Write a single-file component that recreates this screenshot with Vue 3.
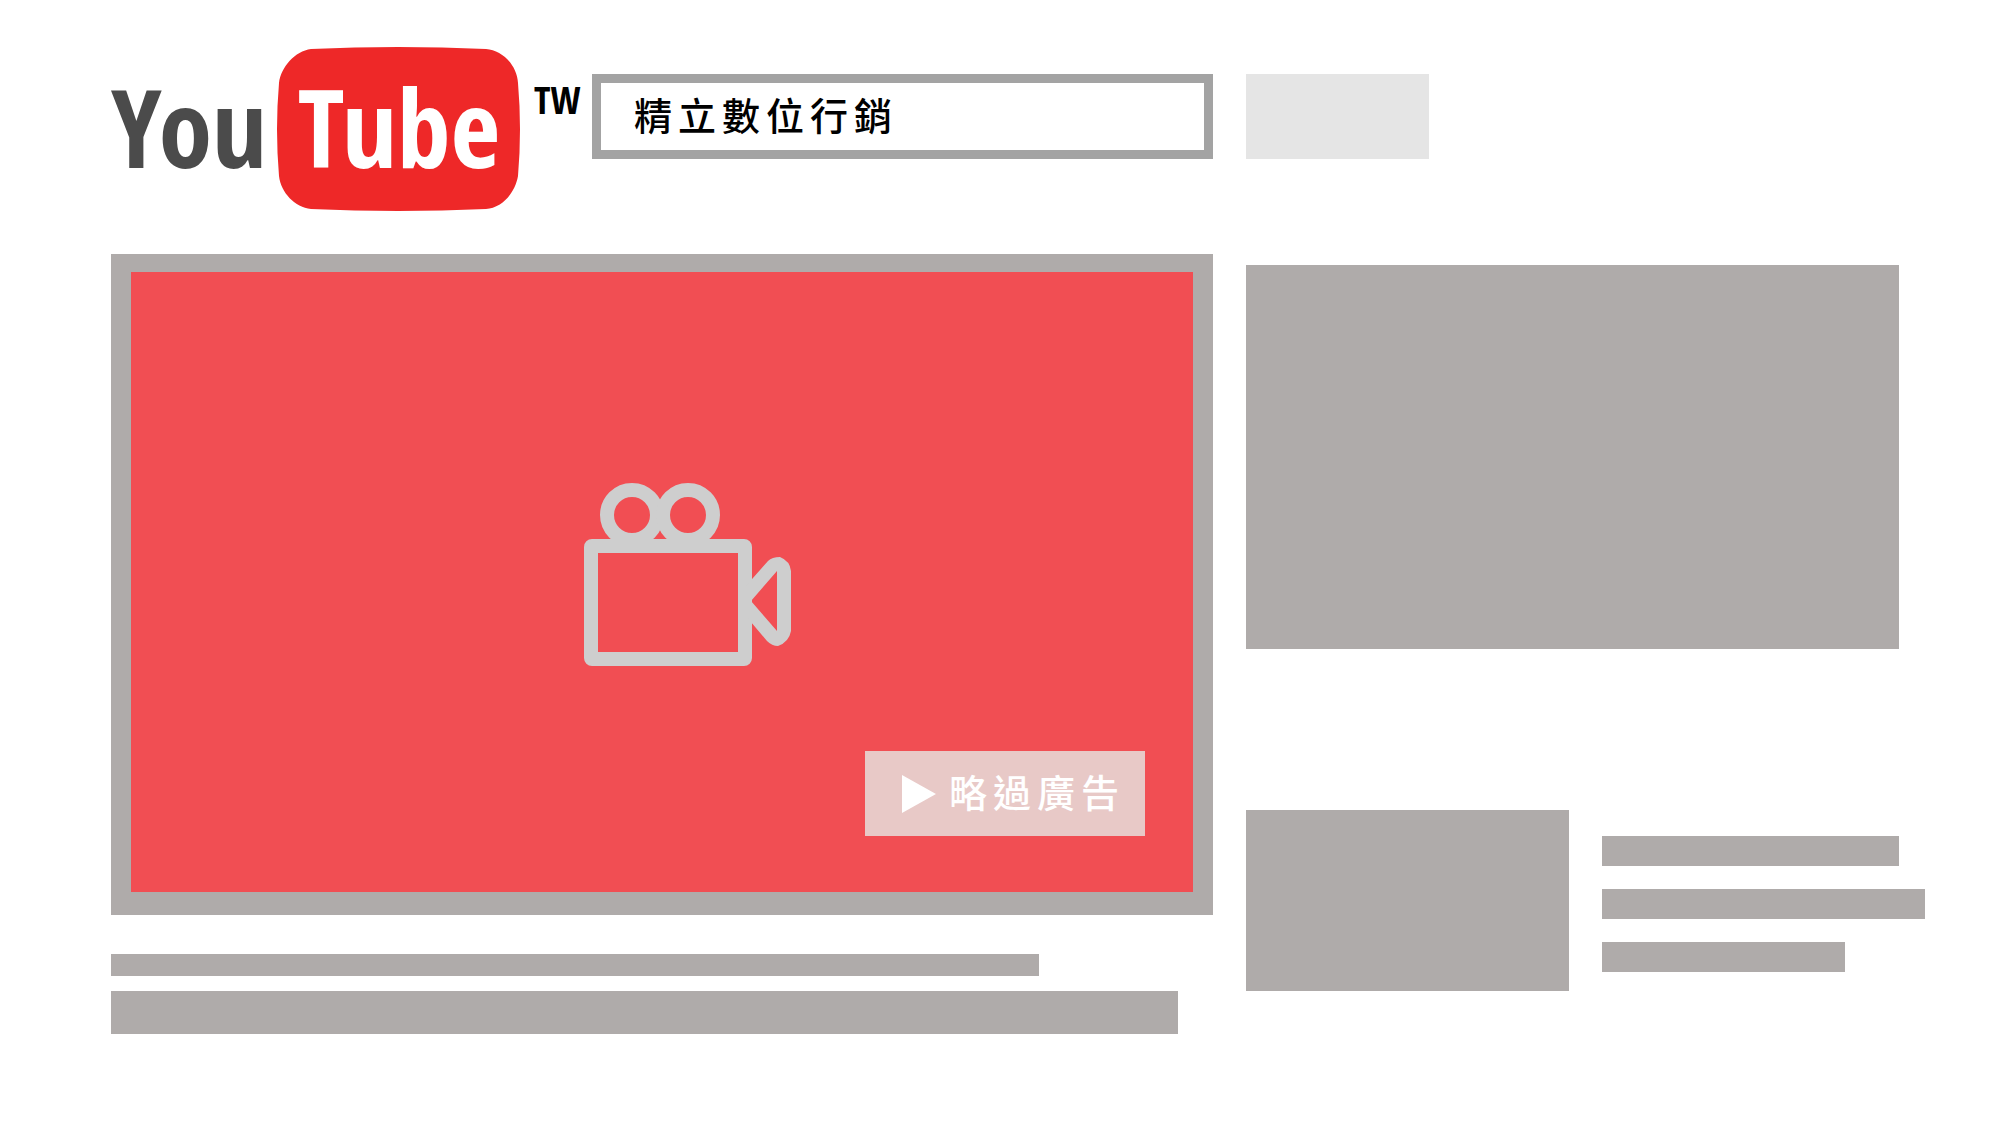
<script setup>
const query = '精立數位行銷'
const captionBars = [
  { width: '84.2%', size: 'short' },
  { width: '96.8%', size: 'tall' }
]
const relatedLines = ['92%', '100%', '75.2%']
</script>

<template>
  <div class="page">
    <header class="columns">
      <div class="masthead">
        <a class="logo" href="#" aria-label="YouTube TW">
          <svg class="wordmark" viewBox="0 0 409 164" aria-hidden="true">
            <path
              class="badge"
              transform="translate(166 0)"
              d="M34 2Q121-2 209 2C225 3 240 18 241 36Q245 82 241 129C238 146 225 161 209 162Q121 166 34 162C18 160 4 146 2 129Q-2 82 2 36C4 20 18 4 34 2Z"
            />
            <text class="you" x="78" y="121">You</text>
            <text class="tube" x="288" y="121">Tube</text>
          </svg>
          <span class="region">TW</span>
        </a>
        <input class="search" type="text" aria-label="搜尋" :value="query" />
      </div>
      <div>
        <button class="search-button" type="button" aria-label="搜尋"></button>
      </div>
    </header>

    <div class="columns">
      <main>
        <section class="player">
          <div class="video">
            <svg class="camera" viewBox="0 0 208 184" aria-hidden="true">
              <circle cx="48" cy="32" r="25" />
              <circle cx="104" cy="32" r="25" />
              <rect x="7" y="63" width="154" height="113" rx="1" />
              <path
                class="lens"
                d="M161 104L184 78Q188 74 196 74Q206 78 207 88V148Q205 159 194 163Q188 163 183 158L161 132ZM167 118L193 148V88Z"
              />
            </svg>
            <button class="skip" type="button">
              <svg class="play" viewBox="0 0 34 38" aria-hidden="true">
                <path d="M0 0L34 19L0 38Z" />
              </svg>
              <span class="skip-label">略過廣告</span>
            </button>
          </div>
        </section>
        <div
          v-for="bar in captionBars"
          :key="bar.size"
          class="block caption"
          :class="bar.size"
          :style="{ width: bar.width }"
        ></div>
      </main>

      <aside>
        <div class="block promo"></div>
        <div class="related">
          <div class="block thumb"></div>
          <div class="lines">
            <div v-for="w in relatedLines" :key="w" class="block line" :style="{ width: w }"></div>
          </div>
        </div>
      </aside>
    </div>
  </div>
</template>

<style>
body {
  margin: 0;
  background: #fff;
}
</style>

<style scoped>
.page {
  box-sizing: border-box;
  padding: 47px 75px 91px 111px;
  font-family: 'Noto Sans CJK TC', sans-serif;
}

.columns {
  display: grid;
  grid-template-columns: minmax(0, 1102fr) minmax(0, 679fr);
  column-gap: 33px;
}

header {
  margin-bottom: 43px;
}

.masthead {
  display: flex;
  align-items: flex-start;
}

.logo {
  display: flex;
  flex: none;
  width: 481px;
  text-decoration: none;
}

.wordmark {
  flex: none;
  width: 409px;
  height: 164px;
  overflow: visible;
}

.badge {
  fill: #ee2828;
}

.you,
.tube,
.region {
  font-family: 'Noto Sans ExtraCondensed', 'Open Sans Condensed', 'Roboto Condensed', 'Liberation Sans Narrow', 'Liberation Sans', sans-serif;
  font-weight: 700;
}

.you,
.tube {
  font-size: 108px;
  text-anchor: middle;
}

.you {
  fill: #4b4b4b;
}

.tube {
  fill: #fff;
}

.region {
  margin: 32px 0 0 14px;
  color: #000;
  font-size: 38px;
  line-height: 40px;
}

.search {
  box-sizing: border-box;
  flex: 1;
  min-width: 0;
  height: 85px;
  margin-top: 27px;
  padding: 0 33px 6px;
  border: 9px solid #a3a3a3;
  border-radius: 0;
  outline: none;
  background: #fff;
  color: #000;
  font: 500 38px/56px 'Noto Sans CJK TC', sans-serif;
  letter-spacing: 6px;
}

.search-button {
  display: block;
  width: 183px;
  height: 85px;
  margin-top: 27px;
  padding: 0;
  border: 0;
  background: #e5e5e5;
}

.player {
  margin-bottom: 39px;
  padding: 18px 20px 23px;
  background: #afabaa;
}

.video {
  position: relative;
  aspect-ratio: 1062 / 620;
  background: #f14e53;
}

.camera {
  position: absolute;
  top: 34%;
  left: 42.7%;
  width: 208px;
  height: 184px;
  fill: none;
  stroke: #cecece;
  stroke-width: 14;
  stroke-linejoin: round;
}

.lens {
  fill: #cecece;
  fill-rule: evenodd;
  stroke: none;
}

.skip {
  position: absolute;
  right: 48px;
  bottom: 56px;
  display: flex;
  align-items: center;
  gap: 13px;
  box-sizing: border-box;
  width: 280px;
  height: 85px;
  padding: 0 0 0 37px;
  border: 0;
  background: #e8c9c7;
  color: #fff;
  font: 500 38px/56px 'Noto Sans CJK TC', sans-serif;
  letter-spacing: 6px;
  white-space: nowrap;
}

.skip-label {
  padding-bottom: 6px;
}

.play {
  flex: none;
  width: 34px;
  height: 38px;
  fill: #fff;
}

.block {
  background: #afabaa;
}

.caption.short {
  height: 22px;
  margin-bottom: 15px;
}

.caption.tall {
  height: 43px;
}

aside {
  padding-top: 11px;
}

.promo {
  aspect-ratio: 653 / 384;
  margin: 0 26px 161px 0;
}

.related {
  display: flex;
  gap: 33px;
}

.thumb {
  flex: 1;
  aspect-ratio: 323 / 181;
}

.lines {
  display: flex;
  flex: 1;
  flex-direction: column;
  gap: 23px;
  padding-top: 26px;
}

.line {
  height: 30px;
}
</style>
